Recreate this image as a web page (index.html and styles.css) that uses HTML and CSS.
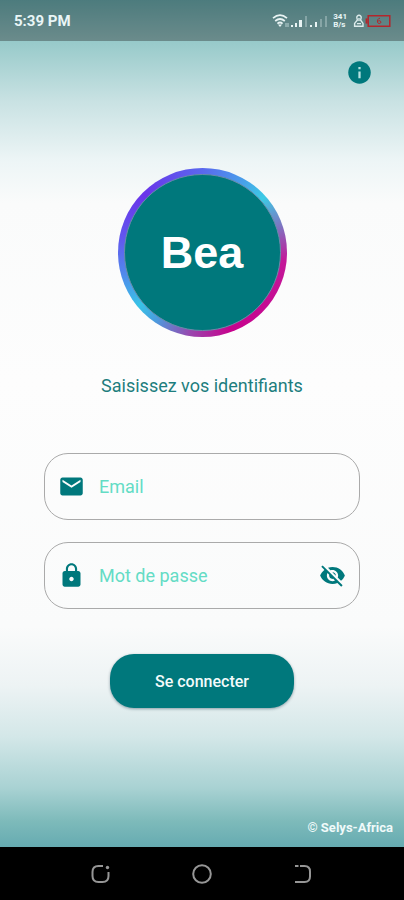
FILE: index.html
```html
<!DOCTYPE html>
<html lang="fr">
<head>
<meta charset="utf-8">
<meta name="viewport" content="width=device-width, initial-scale=1">
<title>Bea</title>
<link rel="stylesheet" href="styles.css">
</head>
<body>
<div class="screen">
  <div class="app">
    <header class="status">
      <span class="time">5:39 PM</span>
      <div class="indicators">
        <svg class="signals" width="56" height="16" viewBox="0 0 56 16" aria-hidden="true">
          <g fill="none" stroke="#e9f4f4" stroke-width="1.7">
            <path d="M1 5.2Q8 -0.8 15 5.2"/>
            <path d="M3.2 8Q8 4 12.8 8"/>
            <path d="M5.4 10.6Q8 8.4 10.6 10.6"/>
          </g>
          <path d="M6 11.6h4L8 14z" fill="#e9f4f4"/>
          <path d="M14 10v4M16 10v4" stroke="#b9d3d3" stroke-width="1"/>
          <g fill="#e9f4f4">
            <path d="M19 12h2v2h-2zM23 10h2v4h-2zM27 7h3v7h-3zM38 12h2v2h-2zM43 9h2v5h-2z"/>
            <path d="M33 3h2v11h-2zM48 6h2v8h-2zM53 3h2v11h-2z" opacity=".3"/>
          </g>
        </svg>
        <span class="rate"><span>341</span><span>B/s</span></span>
        <svg class="power" width="38" height="14" viewBox="0 0 38 14" aria-hidden="true">
          <g fill="none" stroke="#dcebeb" stroke-width="1.4">
            <path d="M6 1.2a2.2 2.2 0 0 1 2.2 2.4L7.6 6 10 9.4v2.8H1.6V9.4L4.4 6 3.8 3.6A2.2 2.2 0 0 1 6 1.2z"/>
            <path d="M4 9.6h4M6 4v3"/>
          </g>
          <path d="M15.2 1.7h21.6v10.6H15.2z" fill="none" stroke="#b3262c" stroke-width="1.5"/>
          <path d="M12.6 4.4h2v5.2h-2z" fill="#b3262c"/>
          <path d="M27 4.2c-2.4.4-2.8 2.2-2.5 4 .2 1.8 3.4 1.700 3.400 0 0-1.700-2.200-1.900-3.200-.8" fill="none" stroke="#b3262c" stroke-width="1"/>
        </svg>
      </div>
    </header>
    <main class="content">
      <button class="info" type="button" aria-label="Informations">
        <svg width="27" height="27" viewBox="0 0 24 24" aria-hidden="true"><path fill="#00787c" d="M12 2C6.480 2 2 6.480 2 12s4.480 10 10 10 10-4.480 10-10S17.520 2 12 2z"/><path fill="#b8e2e2" d="M11 11h2v6h-2zM11 7h2v2h-2z"/></svg>
      </button>
      <div class="ring"><h1 class="logo">Bea</h1></div>
      <p class="prompt">Saisissez vos identifiants</p>
      <form class="form">
        <div class="field">
          <svg width="27" height="27" viewBox="0 0 24 24" aria-hidden="true"><path fill="#00787c" d="M20 4H4c-1.100 0-1.990.9-1.990 2L2 18c0 1.100.9 2 2 2h16c1.100 0 2-.9 2-2V6c0-1.100-.9-2-2-2zm0 4l-8 5-8-5V6l8 5 8-5v2z"/></svg>
          <input type="email" aria-label="Email" placeholder="Email">
        </div>
        <div class="field">
          <svg width="27" height="27" viewBox="0 0 24 24" aria-hidden="true"><path fill="#00787c" d="M18 8h-1V6c0-2.760-2.240-5-5-5S7 3.240 7 6v2H6c-1.100 0-2 .9-2 2v10c0 1.100.9 2 2 2h12c1.100 0 2-.9 2-2V10c0-1.100-.9-2-2-2zm-6 9c-1.100 0-2-.9-2-2s.9-2 2-2 2 .9 2 2-.9 2-2 2zm3.100-9H8.900V6c0-1.710 1.390-3.100 3.100-3.100 1.710 0 3.100 1.390 3.100 3.100v2z"/></svg>
          <input type="password" aria-label="Mot de passe" placeholder="Mot de passe">
          <button class="reveal" type="button" aria-label="Afficher le mot de passe">
            <svg width="27" height="27" viewBox="0 0 24 24" aria-hidden="true"><path fill="#00787c" d="M12 7c2.760 0 5 2.240 5 5 0 .65-.13 1.260-.36 1.830l2.920 2.920c1.510-1.260 2.700-2.890 3.430-4.750-1.730-4.390-6-7.500-11-7.500-1.400 0-2.740.25-3.980.7l2.160 2.160C10.740 7.130 11.350 7 12 7zM2 4.270l2.280 2.280.46.46C3.080 8.300 1.780 10.020 1 12c1.730 4.390 6 7.500 11 7.500 1.550 0 3.030-.3 4.380-.84l.42.42L19.730 22 21 20.730 3.270 3 2 4.270zM7.530 9.800l1.550 1.550c-.05.21-.08.43-.08.65 0 1.660 1.340 3 3 3 .22 0 .44-.03.65-.08l1.550 1.550c-.67.33-1.410.53-2.200.53-2.760 0-5-2.240-5-5 0-.79.2-1.530.53-2.200zm4.310-.78l3.150 3.150.02-.16c0-1.660-1.340-3-3-3l-.17.01z"/></svg>
          </button>
        </div>
        <button class="submit" type="submit">Se connecter</button>
      </form>
      <footer class="credit">© Selys-Africa</footer>
    </main>
  </div>
  <nav class="keys" aria-label="Navigation">
    <button type="button" aria-label="Applications récentes">
      <svg width="20" height="20" viewBox="0 0 20 20" aria-hidden="true"><path d="M12 2H7.500Q1.500 2 1.500 8v4q0 6 6 6h4q6 0 6-6V8" fill="none" stroke="#969696" stroke-width="2"/><circle cx="16.500" cy="3.500" r="1.700" fill="#969696"/></svg>
    </button>
    <button type="button" aria-label="Accueil">
      <svg width="20" height="20" viewBox="0 0 20 20" aria-hidden="true"><circle cx="10" cy="10" r="8.800" fill="none" stroke="#969696" stroke-width="2"/></svg>
    </button>
    <button type="button" aria-label="Retour">
      <svg width="20" height="20" viewBox="0 0 20 20" aria-hidden="true"><path d="M7 2h4.500q5.500 0 5.500 5.500v5q0 5.500-5.500 5.500H2M2 2h3.500" fill="none" stroke="#969696" stroke-width="2"/></svg>
    </button>
  </nav>
</div>
</body>
</html>
```
FILE: styles.css
```css
* { box-sizing: border-box; }

body {
  margin: 0;
  font-family: Roboto, "Liberation Sans", sans-serif;
  background: #000;
}

button {
  padding: 0;
  border: 0;
  background: none;
  font: inherit;
  cursor: pointer;
}

svg { display: block; flex: none; }

.screen {
  min-height: 100vh;
  display: flex;
  flex-direction: column;
}

.app {
  flex: 1;
  display: flex;
  flex-direction: column;
  background: linear-gradient(#67b0b3 0%, #98caca 5%, #c9e2e3 12%, #edf5f6 19%, #fafbfb 24%, #fdfdfd 45%, #fafbfb 74%, #edf3f4 81%, #d3e7e8 87%, #a9d2d3 93%, #7dbaba 97%, #66abb1 100%);
}

.status {
  height: 41px;
  padding: 0 13px 0 14px;
  display: flex;
  align-items: center;
  justify-content: space-between;
  background: rgba(30, 30, 30, .36);
  color: #e9f6f7;
}

.time { font-size: 15px; font-weight: 700; }

.indicators { display: flex; align-items: center; }

.rate {
  display: flex;
  flex-direction: column;
  margin: 0 6px 0 5px;
  font-size: 8px;
  line-height: 8px;
  font-weight: 700;
}

.content {
  flex: 1;
  display: flex;
  flex-direction: column;
  align-items: center;
}

.info { margin: 18px 31px 0 0; align-self: flex-end; }

.ring {
  width: 169px;
  height: 169px;
  margin-top: 82px;
  padding: 6px;
  border-radius: 50%;
  background: conic-gradient(#5a68ee, #48a0ea 30deg, #3ccbe5 48deg, #7f72c0 72deg, #c31899 95deg, #c7028d 160deg, #9a45ad 188deg, #4a9ddf 215deg, #38c3e6 230deg, #5189ec 255deg, #6257ee 280deg, #6a34ea 315deg, #5a68ee);
}

.logo {
  height: 100%;
  margin: 0;
  display: flex;
  align-items: center;
  justify-content: center;
  border: 1px solid #688ca8;
  border-radius: 50%;
  background: #00787c;
  color: #fff;
  font: 700 45px "Liberation Sans", Arial, sans-serif;
}

.prompt {
  margin: 37px 0 0;
  font-size: 18px;
  line-height: 24px;
  color: #1d7e7e;
}

.form {
  align-self: stretch;
  margin: 55px 44px 0;
  display: flex;
  flex-direction: column;
  gap: 22px;
}

.field {
  height: 67px;
  padding: 0 13px;
  display: flex;
  align-items: center;
  gap: 14px;
  border: 1px solid #aaa;
  border-radius: 24px;
}

.field input {
  flex: 1;
  min-width: 0;
  padding: 0;
  border: 0;
  outline: 0;
  background: none;
  font: 18px/24px Roboto, sans-serif;
  color: #00787c;
}

.field input::placeholder { color: #64dcc5; opacity: 1; }

.submit {
  width: 184px;
  height: 54px;
  margin-top: 23px;
  align-self: center;
  border-radius: 24px;
  background: #00787c;
  box-shadow: 0 1px 3px rgba(0, 40, 60, .4);
  color: #f3fbfb;
  font-size: 16px;
  font-weight: 500;
}

.credit {
  margin: auto 11px 11px auto;
  font-size: 13px;
  line-height: 16px;
  font-weight: 700;
  color: #f0fafa;
}

.keys {
  height: 53px;
  padding: 0 51px;
  display: flex;
  align-items: center;
  background: #000;
}

.keys button {
  flex: 1;
  display: flex;
  justify-content: center;
}
```
